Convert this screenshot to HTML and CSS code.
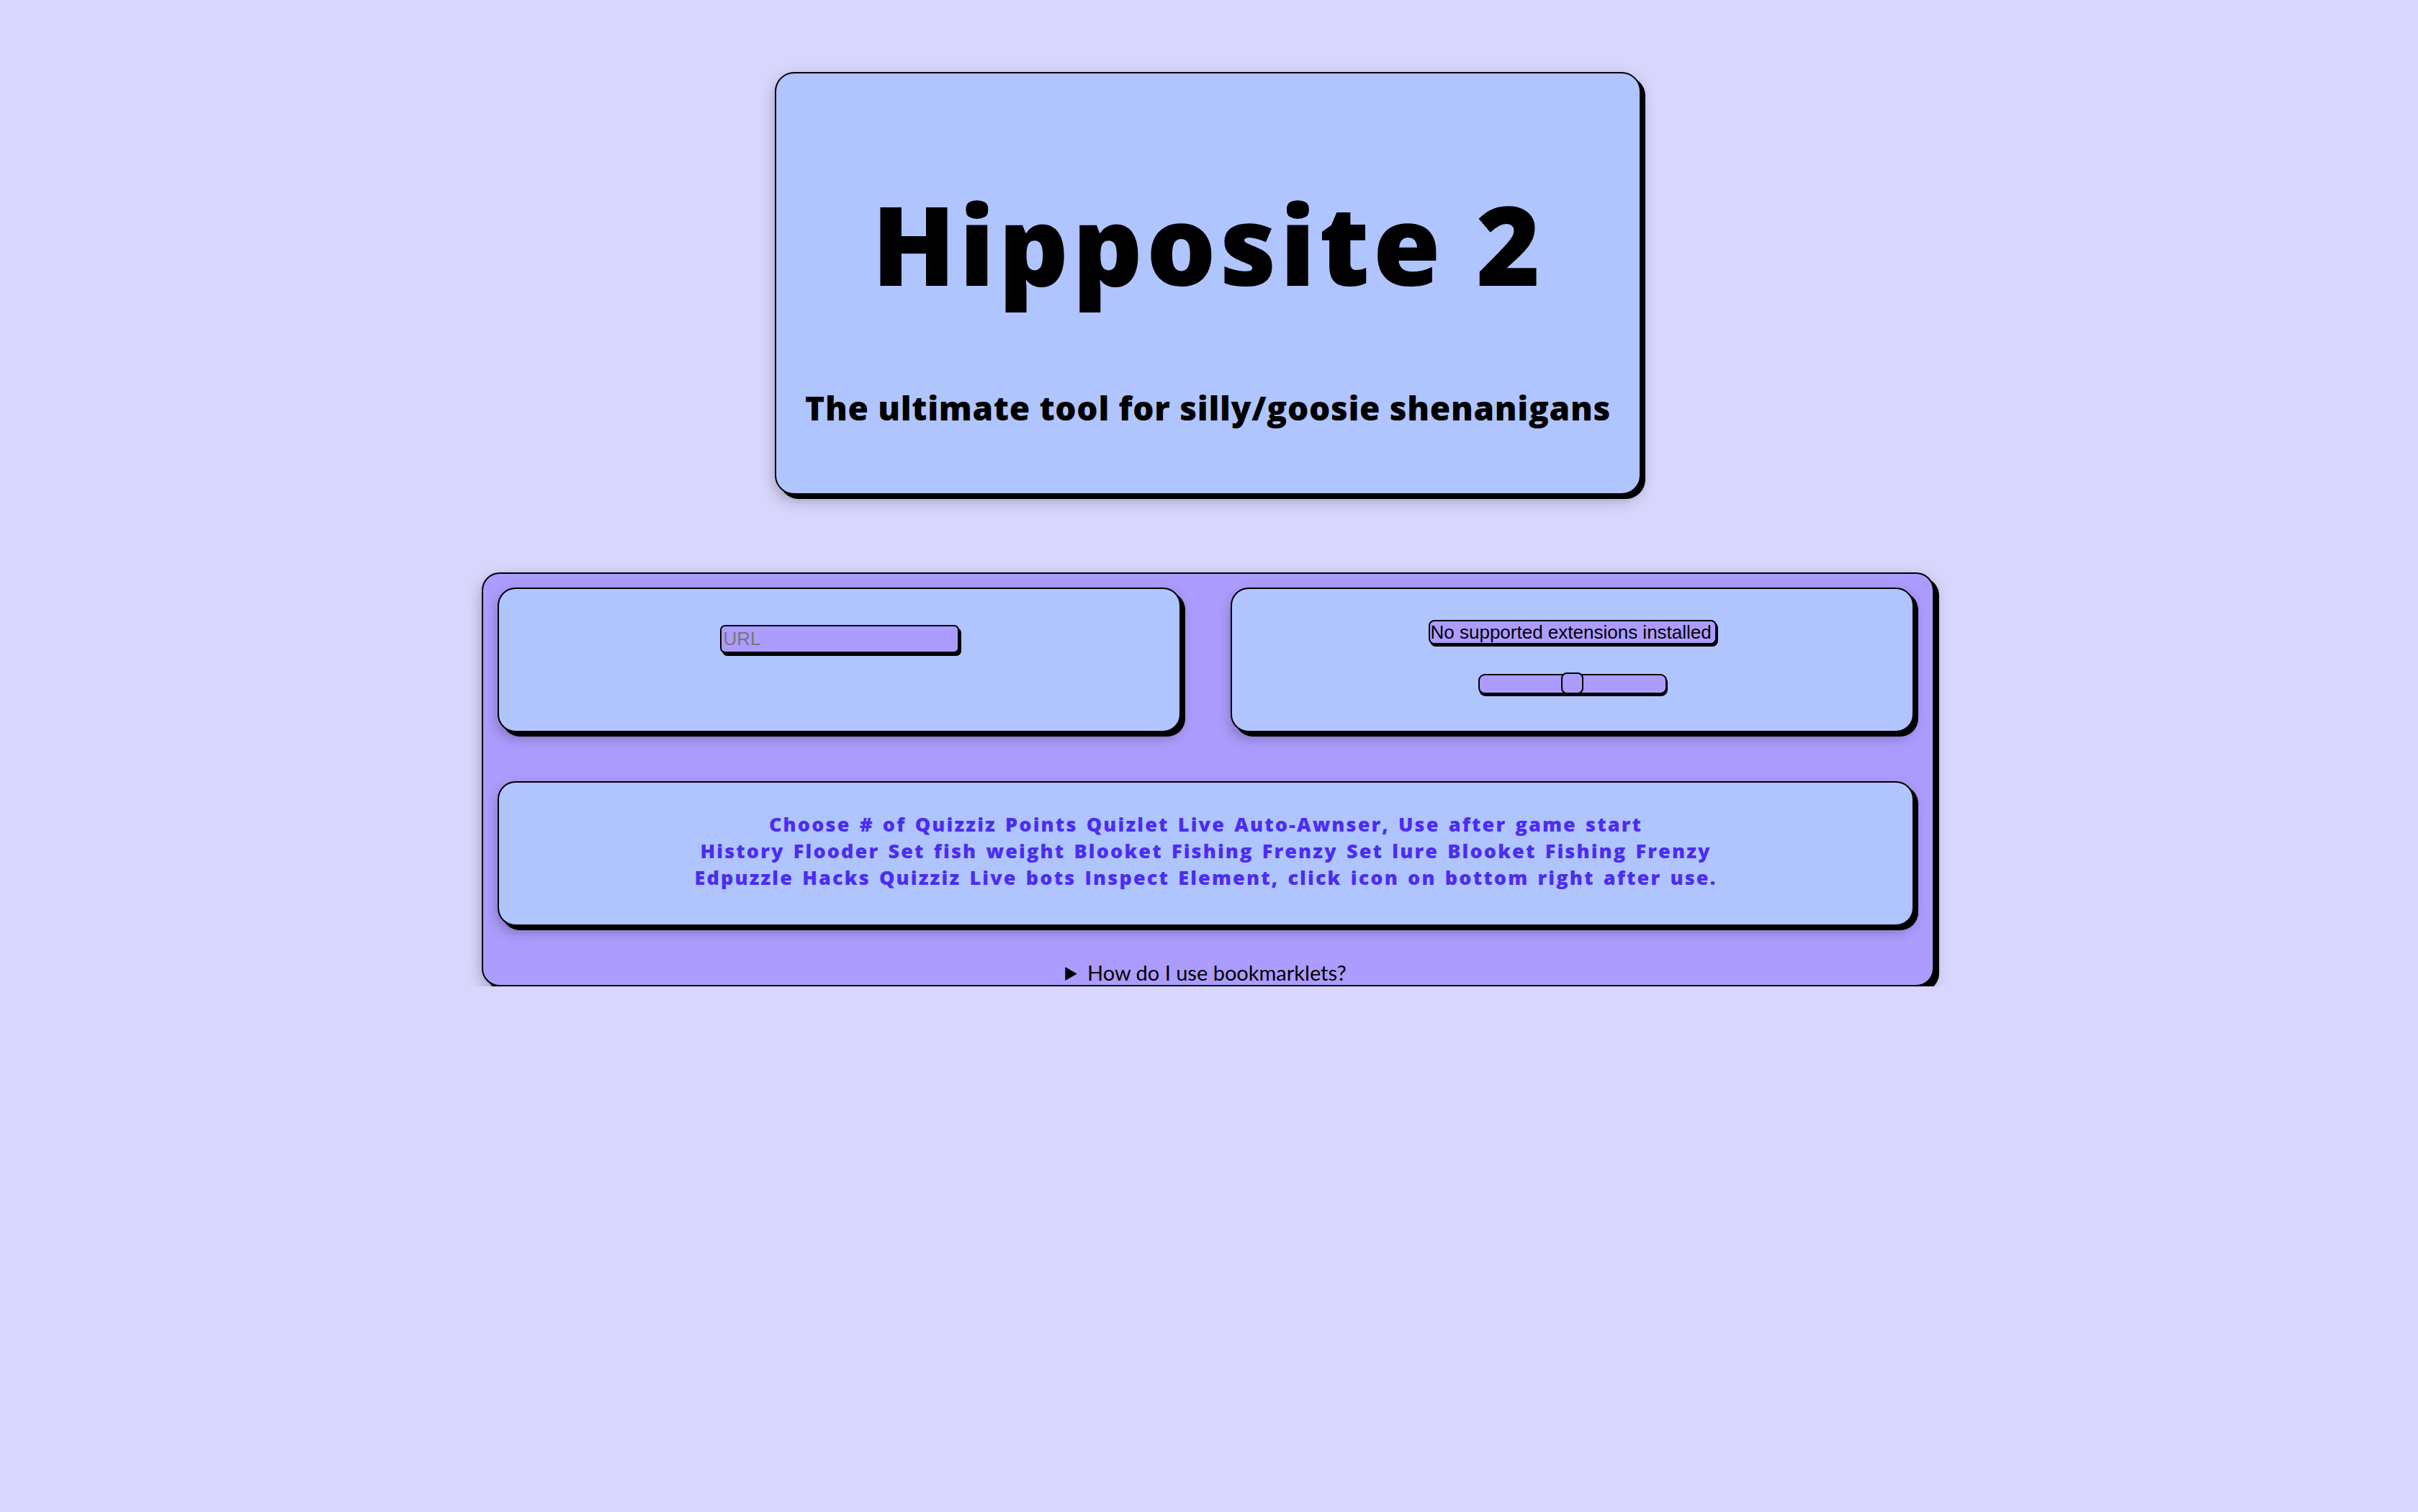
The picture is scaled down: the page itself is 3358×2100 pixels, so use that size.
FILE: index.html
```html
<!DOCTYPE html>
<html lang="en">
<head>
<meta charset="utf-8">
<title>Hipposite 2</title>
<link rel="stylesheet" href="styles.css">
</head>
<body>
<div class="page">
  <header class="hero">
    <h1 class="hero-title">Hipposite 2</h1>
    <p class="hero-sub">The ultimate tool for silly/goosie shenanigans</p>
  </header>

  <main class="panel">
    <div class="panel-row">
      <section class="card card-url">
        <input class="url-input" type="text" placeholder="URL">
      </section>
      <section class="card card-ext">
        <select class="ext-select">
          <option>No supported extensions installed</option>
        </select>
        <input class="ext-range" type="range" min="0" max="100" value="50">
      </section>
    </div>

    <section class="card card-links">
      <p class="links">
        <a href="#">Choose # of Quizziz Points</a> <a href="#">Quizlet Live Auto-Awnser, Use after game start</a><br>
        <a href="#">History Flooder</a> <a href="#">Set fish weight Blooket Fishing Frenzy</a> <a href="#">Set lure Blooket Fishing Frenzy</a><br>
        <a href="#">Edpuzzle Hacks</a> <a href="#">Quizziz Live bots</a> <a href="#">Inspect Element, click icon on bottom right after use.</a>
      </p>
    </section>

    <details class="help">
      <summary>How do I use bookmarklets?</summary>
      <p>Drag a link to your bookmarks bar, then click it on the target page.</p>
    </details>
  </main>
</div>
</body>
</html>
```

FILE: styles.css
```css
html, body {
  margin: 0;
  padding: 0;
  background: #d9d6fe;
}

body {
  font-family: "Open Sans", Lato, sans-serif;
  color: #000;
}

.page {
  padding-top: 100px;
  padding-right: 3px;
  display: flex;
  flex-direction: column;
  align-items: center;
}

.hero {
  box-sizing: border-box;
  width: 1203px;
  padding: 142px 0 90px;
  background: #b0c4fe;
  border: 2px solid #000;
  border-radius: 27px;
  box-shadow: 6px 6px 0 #000, 0 8px 20px rgba(0, 0, 0, 0.28);
  text-align: center;
}

.hero-title {
  margin: 0;
  font-size: 152px;
  line-height: 190px;
  font-weight: 800;
  letter-spacing: 5px;
}

.hero-sub {
  margin: 104px 0 0;
  font-size: 46px;
  line-height: 57px;
  font-weight: 800;
  letter-spacing: 0.7px;
}

.panel {
  box-sizing: border-box;
  width: 2017px;
  margin-top: 108px;
  padding: 19px 26px 0 20px;
  background: #ac9cfe;
  border: 2px solid #000;
  border-radius: 25px;
  box-shadow: 7px 7px 0 #000, 0 8px 20px rgba(0, 0, 0, 0.28);
}

.panel-row {
  display: grid;
  grid-template-columns: 1fr 1fr;
  column-gap: 69px;
}

.card {
  box-sizing: border-box;
  height: 201px;
  background: #b0c4fe;
  border: 2px solid #000;
  border-radius: 25px;
  box-shadow: 6px 6px 0 #000, 0 8px 18px rgba(0, 0, 0, 0.28);
}

.card-url {
  display: flex;
  flex-direction: column;
  align-items: center;
  padding-top: 50px;
}

.url-input {
  box-sizing: border-box;
  width: 332px;
  height: 39px;
  margin: 0;
  padding: 0 3px;
  background: #ac9cfe;
  border: 2px solid #000;
  border-radius: 7px;
  box-shadow: 3px 4px 0 #000;
  font-family: "Liberation Sans", Arial, sans-serif;
  font-size: 26px;
  color: #000;
  outline: none;
}

.url-input::placeholder {
  color: #767676;
}

.card-ext {
  display: flex;
  flex-direction: column;
  align-items: center;
  padding-top: 43px;
  gap: 41px;
}

.ext-select {
  -webkit-appearance: none;
  appearance: none;
  box-sizing: border-box;
  height: 34px;
  margin: 0;
  padding: 0 4px 0 1px;
  background: #ac9cfe;
  border: 2px solid #000;
  border-radius: 8px;
  box-shadow: 2px 3px 0 #000;
  font-family: "Liberation Sans", Arial, sans-serif;
  font-size: 26px;
  color: #000;
}

.ext-range {
  -webkit-appearance: none;
  appearance: none;
  box-sizing: border-box;
  width: 262px;
  height: 28px;
  margin: 0;
  padding: 0;
  background: #ac9cfe;
  border: 2px solid #000;
  border-radius: 9px;
  box-shadow: 1px 3px 0 #000;
}

.ext-range::-webkit-slider-runnable-track {
  height: 24px;
  background: transparent;
  border: none;
}

.ext-range::-webkit-slider-thumb {
  -webkit-appearance: none;
  appearance: none;
  box-sizing: border-box;
  width: 31px;
  height: 30px;
  margin-top: -4px;
  background: #ac9cfe;
  border: 2px solid #000;
  border-radius: 8px;
}

.card-links {
  width: 100%;
  margin-top: 68px;
  padding-top: 39px;
}

.links {
  margin: 0;
  text-align: center;
  font-size: 27px;
  line-height: 37px;
  font-weight: 800;
  letter-spacing: 2.15px;
  word-spacing: 3px;
}

.links a {
  color: #4b2df0;
  text-decoration: none;
}

.help {
  margin-top: 47px;
  text-align: center;
  font-family: Lato, "Open Sans", sans-serif;
  font-size: 29px;
  line-height: 35px;
}

.help summary {
  cursor: pointer;
}

.help p {
  margin: 0;
  padding-bottom: 10px;
}
```
